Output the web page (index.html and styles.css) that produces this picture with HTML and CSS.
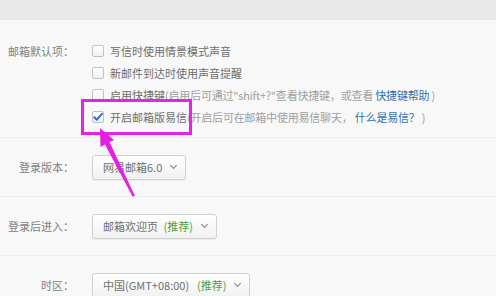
FILE: index.html
```html
<!DOCTYPE html>
<html>
<head>
    <meta charset="utf-8">
    <title>邮箱设置</title>
    <link rel="stylesheet" href="styles.css">
</head>
<body>
    <!-- top bar -->
    <div class="topbar"></div>

    <!-- 邮箱默认项 -->
    <div class="section first">
        <div class="label">邮箱默认项：</div>
        <div class="field">
            <div class="opt"><span class="cb"></span><span class="main">写信时使用情景模式声音</span></div>
            <div class="opt"><span class="cb"></span><span class="main">新邮件到达时使用声音提醒</span></div>
            <div class="opt"><span class="cb"></span><span class="main">启用快捷键</span><span class="hint">(启用后可通过"shift+?"查看快捷键，或查看 <a href="#">快捷键帮助</a> )</span></div>
            <div class="opt"><span class="cb checked"><svg width="12" height="12" viewBox="0 0 12 12"><path d="M2.3 6.2 L4.8 8.7 L10 2.8" fill="none" stroke="#2c6fc9" stroke-width="2" stroke-linecap="round" stroke-linejoin="round"/></svg></span><span class="main">开启邮箱版易信</span><span class="hint">(开启后可在邮箱中使用易信聊天， <a href="#">什么是易信？</a> )</span></div>
        </div>
    </div>

    <!-- 登录版本 -->
    <div class="section">
        <div class="label">登录版本：</div>
        <div class="field">
            <div class="select">网易邮箱6.0<span class="arrow"></span></div>
        </div>
    </div>

    <!-- 登录后进入 -->
    <div class="section">
        <div class="label">登录后进入：</div>
        <div class="field">
            <div class="select">邮箱欢迎页 <span class="rec">(推荐)</span><span class="arrow"></span></div>
        </div>
    </div>

    <!-- 时区 -->
    <div class="section">
        <div class="label">时区：</div>
        <div class="field">
            <div class="select">中国(GMT+08:00)  <span class="rec">(推荐)</span><span class="arrow"></span></div>
        </div>
    </div>

    <!-- annotation drawn over the page -->
    <div class="mark"></div>
    <svg class="pointer" width="496" height="296" viewBox="0 0 496 296">
        <polygon points="100,128 114,140 109.6,142.3 135,196 132.5,196.5 105,144.6 100.5,147" fill="#e41fe4"/>
    </svg>
</body>
</html>
```

FILE: styles.css
```css
body {
    margin: 0;
    background: #f8f8f8;
    font-family: "Noto Sans CJK SC", "Liberation Sans", sans-serif;
    font-size: 11px;
    color: #707070;
    overflow: hidden;
}
.topbar {
    height: 20px;
    background: #e9e9e9;
}

.section {
    display: flex;
    align-items: center;
    height: 58px;
    border-bottom: 1px solid #eeeeee;
}
.section.first {
    align-items: flex-start;
    height: auto;
    padding: 20px 0 9px;
}
.label {
    width: 74px;
    flex: none;
    text-align: right;
    color: #808080;
    line-height: 22px;
}
.field {
    margin-left: 18px;
}

.opt {
    display: flex;
    align-items: center;
    height: 22px;
    white-space: nowrap;
}
.cb {
    width: 10px;
    height: 10px;
    border: 1px solid #c2c2c2;
    border-radius: 2px;
    background: linear-gradient(#fff, #f0f0f0);
    margin-right: 6px;
    position: relative;
}
.cb svg {
    position: absolute;
    left: -1px;
    top: -1px;
}
.main { color: #6e6e6e; }
.hint {
    color: #a0a0a0;
    letter-spacing: -0.2px;
}
.hint a {
    color: #366fa9;
    text-decoration: none;
}

.select {
    display: inline-flex;
    align-items: center;
    height: 23px;
    padding: 0 9px 0 10px;
    border: 1px solid #d0d0d0;
    border-radius: 3px;
    background: linear-gradient(#ffffff, #f1f1f1);
    box-shadow: 0 1px 1px rgba(0,0,0,0.06);
    color: #707070;
    font-size: 11px;
    white-space: pre;
}
.rec {
    color: #4a9e48;
    margin-left: 3px;
}
.arrow {
    width: 4px;
    height: 4px;
    border-right: 1px solid #808080;
    border-bottom: 1px solid #808080;
    transform: rotate(45deg);
    margin: -3px 0 0 9px;
}

/* pink annotation */
.mark {
    position: absolute;
    left: 81px;
    top: 99px;
    width: 105px;
    height: 30px;
    border: 3px solid #e523e5;
}
.pointer {
    position: absolute;
    left: 0;
    top: 0;
}
```
